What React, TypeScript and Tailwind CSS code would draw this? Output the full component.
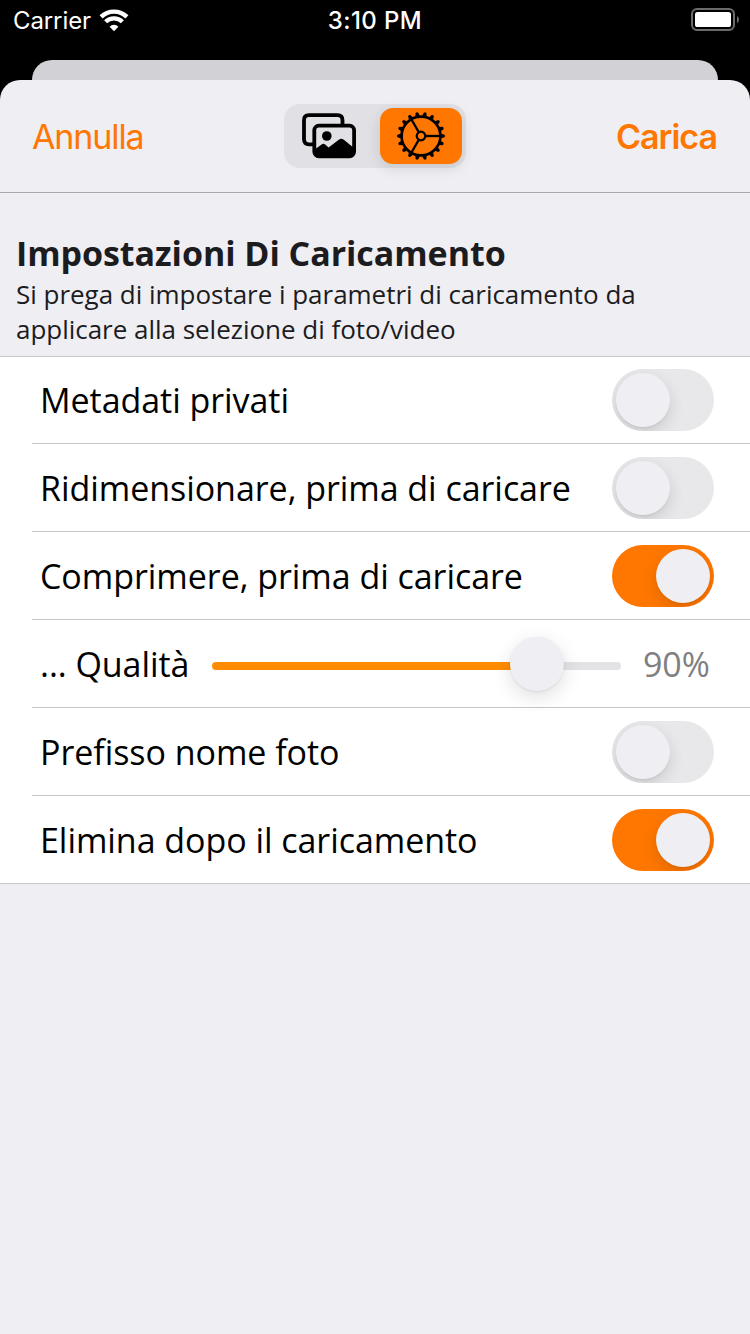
import React from "react";

const sans = "font-['Open_Sans','Noto_Sans',sans-serif]";
const system = "font-['Inter','Liberation_Sans',sans-serif]";

function WifiIcon() {
  return (
    <svg className="mb-[2px] ml-[8px] h-[24px] w-[30px]" viewBox="0 0 30 24" fill="none" stroke="#fff">
      <path d="M2.1 8.9 A18.3 18.3 0 0 1 27.9 8.9" strokeWidth="4.4" />
      <path d="M6.6 13.8 A11.8 11.8 0 0 1 23.4 13.8" strokeWidth="4.2" />
      <path d="M15 23.2 L10.6 18.7 A6.2 6.2 0 0 1 19.4 18.7 Z" fill="#fff" stroke="none" />
    </svg>
  );
}

function BatteryIcon() {
  return (
    <svg className="mt-px h-[24px] w-[50px]" viewBox="0 0 50 24">
      <rect x="2" y="1" width="42" height="21" rx="5" fill="none" stroke="#6b6b6b" strokeWidth="2" />
      <rect x="5" y="4" width="36" height="15" rx="2.6" fill="#fff" />
      <path d="M47 8 Q49 9.2 49 11.5 Q49 13.8 47 15 Z" fill="#6b6b6b" />
    </svg>
  );
}

function PhotosIcon() {
  return (
    <svg className="mr-[10px] mb-[2px] h-[48px] w-[56px] shrink-0" viewBox="0 0 56 48" fill="none" stroke="#000" strokeWidth="3.8">
      <path d="M12.5 33.3 H8 Q3 33.3 3 28.3 V9.2 Q3 4.2 8 4.2 H36.5 Q41.5 4.2 41.5 9.2 V14.5" />
      <rect x="13.3" y="14.7" width="39.8" height="30.6" rx="4.6" />
      <circle cx="25.8" cy="25" r="4.8" fill="#000" stroke="none" />
      <path
        d="M13 39 L20.6 33.4 Q22.4 32 24.2 33.4 L27.6 36.4 L37.8 28.8 Q40.3 26.8 42.8 28.8 L53 37 V42 Q53 45.3 49.5 45.3 H17 Q13 45.3 13 41 Z"
        fill="#000"
        stroke="none"
      />
    </svg>
  );
}

const teeth = Array.from({ length: 18 }, (_, i) => i * 20);

function GearIcon() {
  return (
    <svg className="h-[50px] w-[50px]" viewBox="-25 -25 50 50" fill="none" stroke="#000">
      <circle r="19.4" strokeWidth="2.6" />
      <circle r="4.3" strokeWidth="2.2" />
      {[0, 120, 240].map((a) => (
        <path key={a} d="M4.8 0 H19" strokeWidth="2.3" transform={`rotate(${a})`} />
      ))}
      {teeth.map((a) => (
        <path
          key={a}
          d="M19.8 -2.4 L23.5 -1.3 Q24.6 0 23.5 1.3 L19.8 2.4 Z"
          fill="#000"
          stroke="none"
          transform={`rotate(${a})`}
        />
      ))}
    </svg>
  );
}

function Toggle({ on }: { on: boolean }) {
  return (
    <button
      role="switch"
      aria-checked={on}
      className={`mt-px flex h-[62px] w-[102px] shrink-0 items-center overflow-hidden rounded-full px-1 ${
        on ? "justify-end bg-[#ff7700]" : "justify-start bg-[#e8e8ea]"
      }`}
    >
      <span className="size-[54px] rounded-full bg-[#efeef3] shadow-[0_6px_16px_rgba(0,0,0,0.13),0_2px_2px_rgba(0,0,0,0.04)]" />
    </button>
  );
}

function Row({ label, width = "flex-1", last, children }: { label: string; width?: string; last?: boolean; children: React.ReactNode }) {
  return (
    <div className={last ? "border-b border-[#c6c6c8] pl-8" : "pl-8"}>
      <div className={`box-content flex h-[87px] items-center pr-9 pl-2 ${last ? "" : "border-b border-[#c6c6c8]"}`}>
        <span className={`pt-px text-[34px] leading-[46px] tracking-[-0.05px] whitespace-nowrap text-black ${width}`}>{label}</span>
        {children}
      </div>
    </div>
  );
}

export default function App() {
  return (
    <div className="flex h-[1334px] w-[750px] flex-col overflow-hidden bg-black">
      <div className={`grid h-[60px] grid-cols-3 pt-[7px] text-[24px] leading-[28px] text-white ${system}`}>
        <div className="flex h-[28px] items-center pl-[13px]">
          <span className="tracking-[-0.1px]">Carrier</span>
          <WifiIcon />
        </div>
        <div className="text-center font-medium tracking-[0.4px]">3:10 PM</div>
        <div className="flex justify-end pr-[10px]">
          <BatteryIcon />
        </div>
      </div>
      <div className="mx-8 h-5 shrink-0 rounded-t-[20px] bg-[#d2d1d6]" />
      <div className="flex-1 rounded-t-[20px] bg-[#efeef3]">
        <header
          className={`grid h-[113px] grid-cols-[1fr_182px_1fr] items-center border-b border-[#a9a9ad] px-8 text-[34px] text-[#ff7700] ${system}`}
        >
          <button className="text-left tracking-[-1.1px]">Annulla</button>
          <div className="flex h-[64px] items-center rounded-[16px] bg-[#e1e0e5] p-1">
            <button className="flex h-[56px] flex-1 items-center justify-center">
              <PhotosIcon />
            </button>
            <button className="flex h-[56px] w-[82px] items-center justify-center rounded-[13px] bg-[#ff7700] shadow-[0_4px_14px_rgba(0,0,0,0.12)]">
              <GearIcon />
            </button>
          </div>
          <button className="pr-px text-right font-semibold tracking-[-1px]">Carica</button>
        </header>
        <main className={sans}>
          <div className="relative h-[164px] border-b border-[#c6c6c8] px-4 pt-[37px] text-[#1c1c1e]">
            <h1 className="mb-px text-[34px] leading-[46px] font-bold tracking-[-0.05px] whitespace-nowrap">Impostazioni Di Caricamento</h1>
            <p className="text-[26px] leading-[35px] tracking-[-0.025px] whitespace-nowrap">
              Si prega di impostare i parametri di caricamento da
              <br />
              applicare alla selezione di foto/video
            </p>
          </div>
          <div className="-mt-px bg-white">
            <Row label="Metadati privati">
              <Toggle on={false} />
            </Row>
            <Row label="Ridimensionare, prima di caricare">
              <Toggle on={false} />
            </Row>
            <Row label="Comprimere, prima di caricare">
              <Toggle on />
            </Row>
            <Row label="... Qualità" width="w-[172px]">
              <div className="mt-px flex h-[54px] w-[409px] items-center">
                <span className="mt-[4px] -mr-1 h-2 w-[302px] rounded-l-full bg-[#ff8c00]" />
                <span className="z-10 size-[54px] shrink-0 rounded-full bg-[#efeef3] shadow-[0_6px_20px_rgba(0,0,0,0.13),0_1px_3px_rgba(0,0,0,0.07)]" />
                <span className="mt-[4px] -ml-1 h-2 flex-1 rounded-r-full bg-[#e3e3e5]" />
              </div>
              <span className="ml-[22px] pt-px text-[34px] leading-[46px] tracking-[-0.1px] text-[#808080]">90%</span>
            </Row>
            <Row label="Prefisso nome foto">
              <Toggle on={false} />
            </Row>
            <Row label="Elimina dopo il caricamento" last>
              <Toggle on />
            </Row>
          </div>
        </main>
      </div>
    </div>
  );
}
